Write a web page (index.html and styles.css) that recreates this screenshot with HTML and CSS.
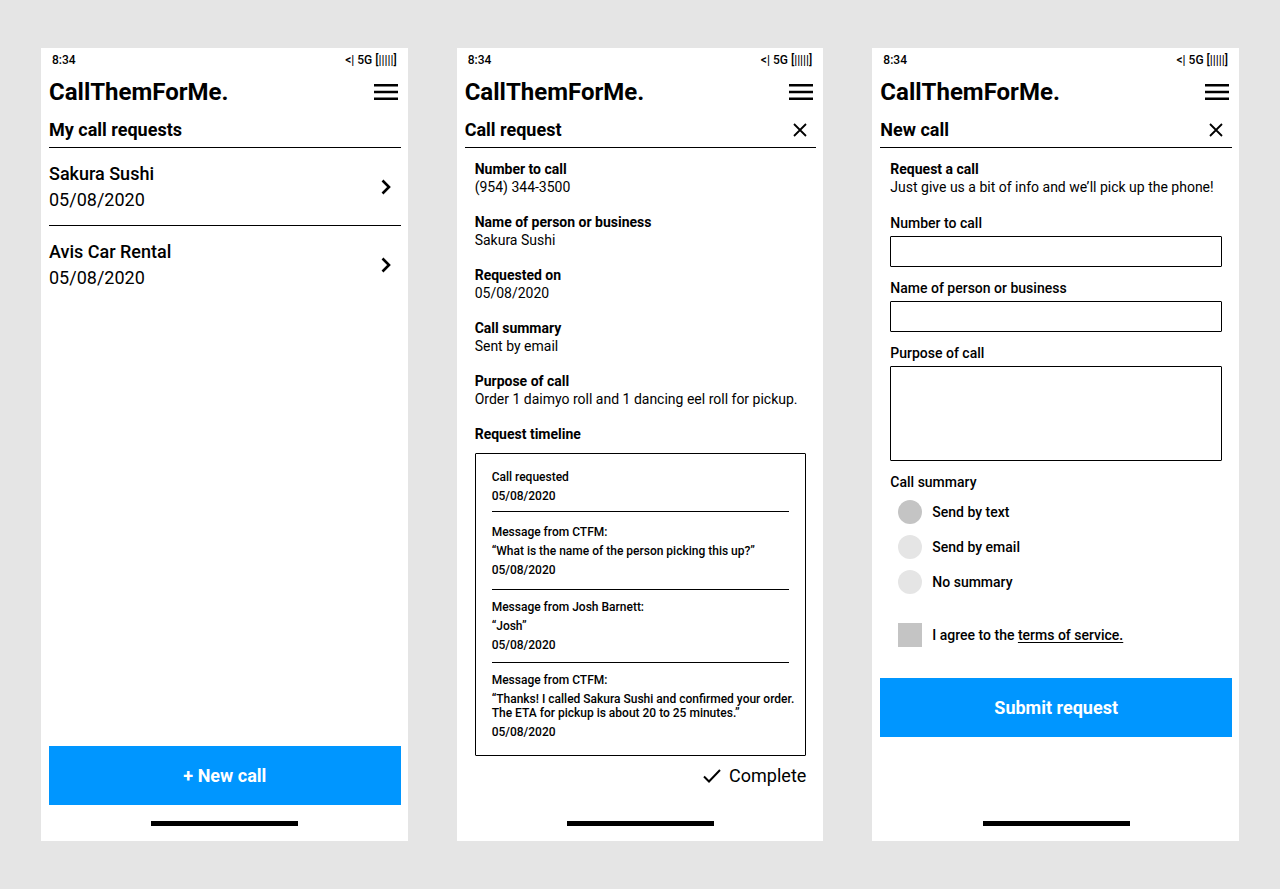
FILE: index.html
```html
<!DOCTYPE html>
<html lang="en">
<head>
<meta charset="utf-8">
<meta name="viewport" content="width=device-width, initial-scale=1">
<title>CallThemForMe.</title>
<link rel="stylesheet" href="styles.css">
</head>
<body>
<main class="board">

  <section class="phone">
    <div class="status"><span>8:34</span><span>&lt;| 5G [|||||]</span></div>
    <header class="appbar">
      <h1 class="brand">CallThemForMe.</h1>
      <button class="icon-button" type="button" aria-label="Menu">
        <svg class="menu-icon" viewBox="0 0 24 18"><path d="M0 2.200h24M0 9h24M0 15.800h24"/></svg>
      </button>
    </header>
    <div class="section-head"><h2 class="section-title">My call requests</h2></div>
    <ul class="requests">
      <li>
        <a class="request" href="#sakura">
          <span class="request-text"><span class="request-name">Sakura Sushi</span><span>05/08/2020</span></span>
          <svg class="chevron" viewBox="0 0 10 16"><path d="M1.500 1.500L8 8l-6.500 6.500"/></svg>
        </a>
      </li>
      <li>
        <a class="request" href="#avis">
          <span class="request-text"><span class="request-name">Avis Car Rental</span><span>05/08/2020</span></span>
          <svg class="chevron" viewBox="0 0 10 16"><path d="M1.500 1.500L8 8l-6.500 6.500"/></svg>
        </a>
      </li>
    </ul>
    <div class="footer">
      <button class="primary" type="button">+ New call</button>
      <div class="home-bar"></div>
    </div>
  </section>

  <section class="phone">
    <div class="status"><span>8:34</span><span>&lt;| 5G [|||||]</span></div>
    <header class="appbar">
      <h1 class="brand">CallThemForMe.</h1>
      <button class="icon-button" type="button" aria-label="Menu">
        <svg class="menu-icon" viewBox="0 0 24 18"><path d="M0 2.200h24M0 9h24M0 15.800h24"/></svg>
      </button>
    </header>
    <div class="section-head">
      <h2 class="section-title">Call request</h2>
      <button class="icon-button close" type="button" aria-label="Close">
        <svg class="close-icon" viewBox="0 0 14 14"><path d="M1 1l12 12M13 1L1 13"/></svg>
      </button>
    </div>
    <div class="content">
      <dl class="details">
        <div><dt>Number to call</dt><dd>(954) 344-3500</dd></div>
        <div><dt>Name of person or business</dt><dd>Sakura Sushi</dd></div>
        <div><dt>Requested on</dt><dd>05/08/2020</dd></div>
        <div><dt>Call summary</dt><dd>Sent by email</dd></div>
        <div><dt>Purpose of call</dt><dd>Order 1 daimyo roll and 1 dancing eel roll for pickup.</dd></div>
      </dl>
      <h3 class="subhead timeline-title">Request timeline</h3>
      <ol class="timeline">
        <li class="event"><p>Call requested</p><p>05/08/2020</p></li>
        <li class="event event-roomy"><p>Message from CTFM:</p><p>“What is the name of the person picking this up?”</p><p>05/08/2020</p></li>
        <li class="event"><p>Message from Josh Barnett:</p><p>“Josh”</p><p>05/08/2020</p></li>
        <li class="event"><p>Message from CTFM:</p><p>“Thanks! I called Sakura Sushi and confirmed your order.<br>The ETA for pickup is about 20 to 25 minutes.”</p><p>05/08/2020</p></li>
      </ol>
      <p class="complete">
        <svg class="check-icon" viewBox="0 0 18 14"><path d="M1 7.500l5 5L17 1"/></svg>
        Complete
      </p>
    </div>
    <div class="footer"><div class="home-bar"></div></div>
  </section>

  <section class="phone">
    <div class="status"><span>8:34</span><span>&lt;| 5G [|||||]</span></div>
    <header class="appbar">
      <h1 class="brand">CallThemForMe.</h1>
      <button class="icon-button" type="button" aria-label="Menu">
        <svg class="menu-icon" viewBox="0 0 24 18"><path d="M0 2.200h24M0 9h24M0 15.800h24"/></svg>
      </button>
    </header>
    <div class="section-head">
      <h2 class="section-title">New call</h2>
      <button class="icon-button close" type="button" aria-label="Close">
        <svg class="close-icon" viewBox="0 0 14 14"><path d="M1 1l12 12M13 1L1 13"/></svg>
      </button>
    </div>
    <form class="form">
      <div class="content">
        <h3 class="subhead">Request a call</h3>
        <p class="intro">Just give us a bit of info and we’ll pick up the phone!</p>
        <div class="field">
          <label for="number">Number to call</label>
          <input class="box" id="number" type="tel">
        </div>
        <div class="field">
          <label for="name">Name of person or business</label>
          <input class="box" id="name" type="text">
        </div>
        <div class="field">
          <label for="purpose">Purpose of call</label>
          <textarea class="box box-tall" id="purpose"></textarea>
        </div>
        <fieldset class="options">
          <legend>Call summary</legend>
          <label class="option"><input class="mark" type="radio" name="summary" checked><span>Send by text</span></label>
          <label class="option"><input class="mark" type="radio" name="summary"><span>Send by email</span></label>
          <label class="option"><input class="mark" type="radio" name="summary"><span>No summary</span></label>
        </fieldset>
        <div class="option terms">
          <input class="mark" id="agree" type="checkbox" checked>
          <label for="agree">I agree to the <a href="#terms">terms of service.</a></label>
        </div>
      </div>
      <button class="primary" type="submit">Submit request</button>
    </form>
    <div class="footer"><div class="home-bar"></div></div>
  </section>

</main>
</body>
</html>
```
FILE: styles.css
```css
* { box-sizing: border-box; margin: 0; padding: 0; }

body {
  background: #e5e5e5;
  color: #000;
  font-family: Roboto, "Liberation Sans", sans-serif;
  font-size: 14px;
  line-height: 18px;
}

button, input, textarea { font: inherit; color: inherit; }
ul, ol { list-style: none; }
a { color: inherit; text-underline-offset: 2px; }
svg { display: block; fill: none; stroke: #000; }

.board {
  display: grid;
  grid-template-columns: repeat(auto-fit, minmax(340px, 1fr));
  gap: 49px;
  min-height: 100vh;
  padding: 48px 41px;
}

.phone {
  display: flex;
  flex-direction: column;
  background: #fff;
  padding: 0 7px 15px 8px;
}

.status {
  display: flex;
  justify-content: space-between;
  padding: 3px 4px 3px 3px;
  font-size: 12px;
  font-weight: 500;
}

.appbar {
  display: flex;
  justify-content: space-between;
  align-items: center;
  height: 40px;
  padding-right: 3px;
}

.brand { font-size: 24px; line-height: 32px; font-weight: 700; }

.icon-button { border: 0; background: none; cursor: pointer; }
.menu-icon { width: 24px; height: 18px; stroke-width: 2.4; }
.close { padding: 0 9px; }
.close-icon { width: 14px; height: 14px; stroke-width: 1.8; }

.section-head {
  display: flex;
  justify-content: space-between;
  align-items: center;
  height: 36px;
  border-bottom: 1px solid #000;
}
.section-title { font-size: 18px; line-height: 24px; font-weight: 700; }

.request {
  display: flex;
  justify-content: space-between;
  align-items: center;
  padding: 13px 10px 12px 0;
  font-size: 18px;
  line-height: 26px;
  text-decoration: none;
}
.requests li + li { border-top: 1px solid #000; }
.request-text { display: flex; flex-direction: column; }
.request-name { font-weight: 500; }
.chevron { width: 10px; height: 16px; stroke-width: 2.6; }

.footer { margin-top: auto; }
.home-bar { width: 147px; height: 5px; margin: 16px auto 0; background: #000; }

.primary {
  display: block;
  width: 100%;
  height: 59px;
  border: 0;
  background: #0096ff;
  color: #fff;
  font-size: 18px;
  font-weight: 700;
  cursor: pointer;
}

.content { padding: 12px 10px 0; }

.details { display: grid; gap: 17px; }
.details dt, .subhead { font-size: 14px; font-weight: 700; }
.timeline-title { margin: 17px 0 10px; }

.timeline {
  border: 1px solid #000;
  border-radius: 1px;
  padding: 6px 16px;
  font-size: 12px;
  line-height: 14px;
  font-weight: 500;
  white-space: nowrap;
}
.event { display: grid; gap: 5px; padding: 10px 0; }
.event:first-child { padding-bottom: 8px; }
.event-roomy { padding: 13px 0 12px; }
.event + .event { border-top: 1px solid #000; }

.complete {
  display: flex;
  justify-content: flex-end;
  align-items: center;
  gap: 8px;
  margin-top: 8px;
  font-size: 18px;
  line-height: 24px;
}
.check-icon { width: 18px; height: 14px; stroke-width: 2; }

.intro { margin-bottom: 18px; }

.field { display: grid; gap: 4px; margin-bottom: 12px; font-weight: 500; }
.box {
  width: 100%;
  height: 31px;
  padding: 4px 8px;
  border: 1px solid #000;
  border-radius: 1px;
  background: #fff;
}
.box-tall { height: 95px; resize: none; }

.options { border: 0; }
.options legend { margin-bottom: 3px; font-weight: 500; }

.option {
  display: flex;
  align-items: center;
  gap: 10px;
  height: 35px;
  padding-left: 8px;
  font-weight: 500;
}
.mark { appearance: none; width: 24px; height: 24px; background: #e5e5e5; }
.mark[type="radio"] { border-radius: 50%; }
.mark:checked { background: #c4c4c4; }
.terms { margin: 18px 0 26px; }
```
